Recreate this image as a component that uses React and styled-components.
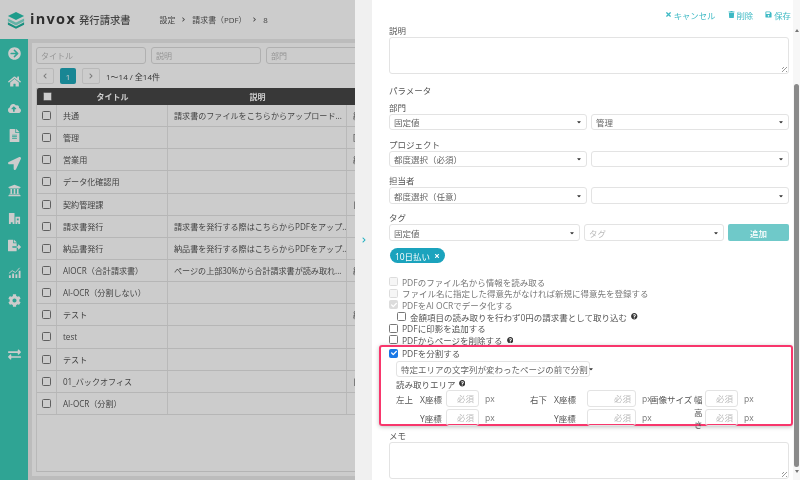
import React from "react";
import styled, { createGlobalStyle } from "styled-components";
import {
  FaArrowCircleRight, FaHome, FaCloudUploadAlt, FaFileAlt, FaLocationArrow, FaUniversity,
  FaFileExport, FaCog, FaExchangeAlt, FaTimes, FaTrash, FaSave, FaQuestionCircle, FaCheck, FaCaretDown, FaChevronLeft, FaChevronRight,
} from "react-icons/fa";

const Global = createGlobalStyle`
  html, body { margin: 0; padding: 0; width: 800px; height: 480px; overflow: hidden; background: #fff; }
  body { font-family: "Open Sans", "Noto Sans CJK JP", sans-serif; font-size: 8.5px; color: #555; }
  * { box-sizing: border-box; }
`;

const Screen = styled.div`
  display: flex; width: 800px; height: 480px; overflow: hidden; filter: blur(0.3px);
`;
const Page = styled.div`
  position: relative; flex: 0 0 355px; width: 355px; height: 480px; overflow: hidden;
  display: flex; flex-direction: column; background: #ececec;
  &::after { content: ""; position: absolute; inset: 0; background: rgba(0,0,0,.2); }
`;
const Header = styled.header`
  flex: 0 0 39px; display: flex; align-items: center; background: #fff; padding-left: 7px;
`;
const Logo = styled.svg`width: 18px; height: 18px; flex: none;`;
const Brand = styled.span`
  margin-left: 5px; font: 700 14.5px/1 "Open Sans", sans-serif; letter-spacing: 1.3px; color: #3a3a3a;
`;
const Product = styled.span`
  margin-left: 3px; font-size: 10.3px; font-weight: 500; color: #555;
`;
const Crumbs = styled.nav`
  margin-left: 29px; display: flex; align-items: center; font-size: 7.9px; color: #555;
  svg { width: 5px; height: 5px; margin: 0 6px; }
`;
const Body = styled.div`flex: 1; display: flex; min-height: 0;`;
const Side = styled.aside`
  flex: 0 0 28px; background: #3bceba; display: flex; flex-direction: column; color: #fff; padding-top: 1px;
`;
const SideIcon = styled.div`
  flex: 0 0 27.4px; display: flex; align-items: center; justify-content: center;
  margin-top: ${p => p.$gap ? "27.4px" : 0};
  svg { width: 13px; height: 13px; }
`;
const Main = styled.main`
  flex: 1; min-width: 0; background: #ebebeb; padding: 4px 0 4px 4px; display: flex;
`;
const Card = styled.section`
  flex: 1; width: 323px; background: #fff; padding: 4px 0 4px 4px; display: flex; flex-direction: column; overflow: hidden;
`;
const Filters = styled.div`display: flex; gap: 5px; width: 400px;`;
const FilterInput = styled.div`
  flex: 0 0 110px; height: 17px; border: 1px solid #ddd; border-radius: 3px; padding-left: 4px; line-height: 15px; color: #bbb; font-size: 8px;
`;
const Pager = styled.div`display: flex; align-items: center; height: 16px; margin-top: 4px; font-size: 8px; color: #444;`;
const PageButton = styled.div`
  width: 18px; height: 16px; border: 1px solid #e8e8e8; border-radius: 2px; display: flex; align-items: center; justify-content: center; color: #999;
  margin-right: ${p => p.$mr || 0}px;
  svg { width: 6px; height: 6px; }
`;
const PageCurrent = styled.div`
  width: 16px; height: 16px; border-radius: 2px; background: #1fa8ba; color: #fff; display: flex; align-items: center; justify-content: center; font-size: 8px; margin-right: 6px;
`;
const Table = styled.div`
  margin-top: 4px; flex: 1; border-bottom: 1px solid #e2e2e2; border-left: 1px solid #e8e8e8; display: flex; flex-direction: column; min-width: 0;
`;
const HeadRow = styled.div`
  flex: 0 0 17px; display: grid; grid-template-columns: 20px 111px 179px 1fr; align-items: center; background: #474747; color: #fff; font-weight: 600; font-size: 8px; text-align: center; border-radius: 2px 0 0 0;
`;
const Row = styled.div`
  flex: 0 0 22.15px; display: grid; grid-template-columns: 20px 111px 179px 1fr; border-bottom: 1px solid #e4e4e4; align-items: stretch; font-size: 8.1px;
`;
const Cell = styled.div`
  border-right: 1px solid #e8e8e8; padding-left: 6px; display: flex; align-items: center; white-space: nowrap; overflow: hidden; letter-spacing: -0.02px;
  &:last-child { border-right: 0; }
`;
const TickCell = styled(Cell)`padding-left: 0; justify-content: center;`;
const Box = styled.span`
  display: inline-flex; align-items: center; justify-content: center; flex: none;
  width: 9px; height: 9px; border-radius: 1.5px;
  border: 1px solid ${p => p.$on ? "#1978e6" : p.$off ? "#dcdcdc" : "#777"};
  background: ${p => p.$on ? "#1978e6" : p.$off ? (p.$grayed ? "#dcdcdc" : "#f6f6f6") : p.$fill ? "#fff" : "transparent"};
  color: #fff;
  svg { width: 6px; height: 6px; }
`;

const Drawer = styled.div`flex: 1; display: flex; min-width: 0;`;
const Handle = styled.div`
  flex: 0 0 17px; background: #f0f0f0; display: flex; align-items: center; justify-content: center; color: #1fb0c0; padding-top: 0;
  svg { width: 6px; height: 6px; }
`;
const Panel = styled.div`flex: 1; min-width: 0; background: #fff; display: flex;`;
const Form = styled.form`flex: 1; min-width: 0; padding: 0 4px 0 17px; display: flex; flex-direction: column; font-size: 8.5px;`;
const Actions = styled.div`
  flex: 0 0 25px; display: flex; justify-content: flex-end; align-items: center; gap: 12px; padding-top: 4px; padding-right: 0; margin-right: -2px; color: #3db9c4; font-size: 8.4px; margin-bottom: 0;
`;
const Action = styled.span`
  display: inline-flex; align-items: center; gap: 2px;
  svg { width: 7px; height: 7px; }
`;
const Label = styled.div`height: 11px; line-height: 11px; color: #555; margin-top: ${p => p.$mt || 0}px; margin-bottom: ${p => p.$mb ?? 1}px;`;
const TextArea = styled.div`
  position: relative; height: 37px; border: 1px solid #e3e3e3; border-radius: 3px; flex: none;
  &::after { content: ""; position: absolute; right: 1px; bottom: 1px; width: 5px; height: 5px;
    background: repeating-linear-gradient(135deg, transparent 0 1px, #999 1px 1.6px, transparent 1.6px 2.4px); }
`;
const Fields = styled.div`display: flex; gap: 4px; height: ${p => p.$h || 17}px; flex: none;`;
const Select = styled.div`
  flex: ${p => p.$w ? `0 0 ${p.$w}px` : 1}; min-width: 0; border: 1px solid #e3e3e3; border-radius: 3px; padding: 0 4px; display: flex; align-items: center; justify-content: space-between; color: ${p => p.$ph ? "#bbb" : "#666"}; white-space: nowrap;
  svg { width: 6px; height: 6px; color: #333; flex: none; }
`;
const AddButton = styled.div`
  flex: 1; background: #6fc9c9; border-radius: 2px; color: #fff; display: flex; align-items: center; justify-content: center; font-weight: 500;
`;
const Chip = styled.div`
  align-self: flex-start; margin: 7px 0 0 1px; width: 55px; height: 15px; border-radius: 8px; background: #1ba3bd; color: #fff; display: flex; align-items: center; justify-content: center; gap: 4px; font-size: 8.5px;
  svg { width: 6px; height: 6px; }
`;
const Checks = styled.div`margin-top: 13px; display: flex; flex-direction: column;`;
const Check = styled.div`
  height: 11.6px; display: flex; align-items: center; gap: 4px; color: ${p => p.$dim ? "#777" : "#555"}; padding-left: ${p => p.$in ? 8 : 0}px; white-space: nowrap; flex: none;
  svg.help { width: 6.5px; height: 6.5px; color: #333; }
`;
const Highlight = styled.div`
  margin: 0 -4px 0 -10px; flex: none; height: 81px; padding: 1px 0 0 8px; border: 2px solid #f8366c; border-radius: 3px; box-shadow: 0 1px 4px rgba(0,0,0,.25); display: flex; flex-direction: column; margin-top: -1px;
`;
const WideSelect = styled(Select)`flex: none; width: 194px; height: 16px; margin: 2px 0 0 7px;`;
const AreaTitle = styled.div`
  margin: 1px 0 0 7px; height: 11px; display: flex; align-items: center; gap: 3px; color: #555;
  svg { width: 6.5px; height: 6.5px; color: #333; }
`;
const AreaGrid = styled.div`
  margin: 0 0 0 7px; display: grid; grid-template-columns: 24px 26px 33px 35px 16px 24px 33px 49px 14px 44px 11px 33px 1fr; grid-auto-rows: 19px; align-items: center; padding-top: 0; color: #555;
`;
const RightText = styled.span`text-align: right; padding-right: 5px;`;
const NumberBox = styled.div`
  height: 17px; border: 1px solid #e3e3e3; border-radius: 3px; text-align: right; padding-right: 4px; line-height: 15px; color: #bbb;
`;
const Unit = styled.span`padding-left: 6px; color: #777;`;
const ScrollBar = styled.div`
  flex: 0 0 7px; background: #f7f7f7; display: flex; flex-direction: column; align-items: center; padding-top: 29px; position: relative;
`;
const Arrow = styled.span`
  width: 0; height: 0; border-left: 2.5px solid transparent; border-right: 2.5px solid transparent;
  ${p => p.$down ? "border-top: 3px solid #777;" : "border-bottom: 3px solid #777;"}
`;
const Thumb = styled.div`width: 5px; height: 383px; margin-top: 52px; border-radius: 3px; background: #8a8a8a; flex: none;`;
const ArrowDown = styled(Arrow)`margin-top: 3px;`;

const rows = [
  ["共通", "請求書のファイルをこちらからアップロード...", "経理"],
  ["管理", "", "[管理"],
  ["営業用", "", "経理"],
  ["データ化確認用", "", ""],
  ["契約管理課", "", "日本"],
  ["請求書発行", "請求書を発行する際はこちらからPDFをアップ...", ""],
  ["納品書発行", "納品書を発行する際はこちらからPDFをアップ...", ""],
  ["AIOCR（合計請求書）", "ページの上部30%から合計請求書が読み取れ...", "経理"],
  ["AI-OCR（分割しない）", "", ""],
  ["テスト", "", "経理"],
  ["test", "", ""],
  ["テスト", "", ""],
  ["01_バックオフィス", "", "日本"],
  ["AI-OCR（分割）", "", ""],
];

const Buildings = () => (
  <svg viewBox="0 0 14 14" fill="currentColor"><path d="M1 1h6v12H5v-2H3v2H1zM8 5h5v8h-2v-2H10v2H8z" /><path d="M9.5 7h2v2h-2z" fill="#3bceba" /></svg>
);
const Chart = () => (
  <svg viewBox="0 0 14 14" fill="currentColor"><path d="M1 10h2v3H1zM4.5 8h2v5h-2zM8 9h2v4H8zM11.5 5h2v8h-2z" /><path d="M1 8l3.5-3 3.5 2 4.5-5" fill="none" stroke="currentColor" strokeWidth="1" /></svg>
);

const Help = () => <FaQuestionCircle className="help" />;
const Down = () => <FaCaretDown />;

function Area({ a, b, c, d, e, f }) {
  return (
    <>
      <span>{a}</span><span>{b}</span><NumberBox>必須</NumberBox><Unit>px</Unit><span />
      <span>{c}</span><span>{d}</span><NumberBox>必須</NumberBox><Unit>px</Unit>
      <span>{e}</span><RightText>{f}</RightText><NumberBox>必須</NumberBox><Unit>px</Unit>
    </>
  );
}

export default function App() {
  return (
    <Screen>
      <Global />
      <Page>
        <Header>
          <Logo viewBox="0 0 20 20">
            <path d="M10 1l9 4.5L10 10 1 5.5z" fill="#27c3ae" />
            <path d="M1 8.2l9 4.5 9-4.5v3.3l-9 4.5-9-4.5z" fill="#7fe0d2" />
            <path d="M1 12.6l9 4.5 9-4.5v2.6L10 19.6 1 15.2z" fill="#1fb49f" />
          </Logo>
          <Brand>invox</Brand>
          <Product>発行請求書</Product>
          <Crumbs>設定<FaChevronRight />請求書（PDF）<FaChevronRight />8</Crumbs>
        </Header>
        <Body>
          <Side>
            <SideIcon><FaArrowCircleRight /></SideIcon>
            <SideIcon><FaHome /></SideIcon>
            <SideIcon><FaCloudUploadAlt /></SideIcon>
            <SideIcon><FaFileAlt /></SideIcon>
            <SideIcon><FaLocationArrow /></SideIcon>
            <SideIcon><FaUniversity /></SideIcon>
            <SideIcon><Buildings /></SideIcon>
            <SideIcon><FaFileExport /></SideIcon>
            <SideIcon><Chart /></SideIcon>
            <SideIcon><FaCog /></SideIcon>
            <SideIcon $gap><FaExchangeAlt /></SideIcon>
          </Side>
          <Main>
            <Card>
              <Filters>
                <FilterInput>タイトル</FilterInput>
                <FilterInput>説明</FilterInput>
                <FilterInput>部門</FilterInput>
              </Filters>
              <Pager>
                <PageButton $mr={6}><FaChevronLeft /></PageButton>
                <PageCurrent>1</PageCurrent>
                <PageButton $mr={6}><FaChevronRight /></PageButton>
                1〜14 / 全14件
              </Pager>
              <Table>
                <HeadRow>
                  <span style={{ display: "flex", justifyContent: "center" }}><Box $fill /></span>
                  <span>タイトル</span>
                  <span>説明</span>
                  <span />
                </HeadRow>
                {rows.map((r, i) => (
                  <Row key={i}>
                    <TickCell><Box /></TickCell>
                    <Cell>{r[0]}</Cell>
                    <Cell>{r[1]}</Cell>
                    <Cell>{r[2]}</Cell>
                  </Row>
                ))}
              </Table>
            </Card>
          </Main>
        </Body>
      </Page>
      <Drawer>
        <Handle><FaChevronRight /></Handle>
        <Panel>
          <Form>
            <Actions>
              <Action><FaTimes />キャンセル</Action>
              <Action><FaTrash />削除</Action>
              <Action><FaSave />保存</Action>
            </Actions>
            <Label>説明</Label>
            <TextArea />
            <Label $mt={11}>パラメータ</Label>
            <Label $mt={5}>部門</Label>
            <Fields $h={16}><Select>固定値<Down /></Select><Select>管理<Down /></Select></Fields>
            <Label $mt={9}>プロジェクト</Label>
            <Fields $h={16}><Select>都度選択（必須）<Down /></Select><Select><span /><Down /></Select></Fields>
            <Label $mt={8}>担当者</Label>
            <Fields><Select>都度選択（任意）<Down /></Select><Select><span /><Down /></Select></Fields>
            <Label $mt={8}>タグ</Label>
            <Fields>
              <Select $w={191}>固定値<Down /></Select>
              <Select $w={140} $ph>タグ<Down /></Select>
              <AddButton>追加</AddButton>
            </Fields>
            <Chip>10日払い<FaTimes /></Chip>
            <Checks>
              <Check $dim><Box $off />PDFのファイル名から情報を読み取る</Check>
              <Check $dim><Box $off />ファイル名に指定した得意先がなければ新規に得意先を登録する</Check>
              <Check $dim><Box $off $grayed><FaCheck /></Box>PDFをAI OCRでデータ化する</Check>
              <Check $in><Box />金額項目の読み取りを行わず0円の請求書として取り込む<Help /></Check>
              <Check><Box />PDFに印影を追加する</Check>
              <Check><Box />PDFからページを削除する<Help /></Check>
            </Checks>
            <Highlight>
              <Check><Box $on><FaCheck /></Box>PDFを分割する</Check>
              <WideSelect>特定エリアの文字列が変わったページの前で分割<Down /></WideSelect>
              <AreaTitle>読み取りエリア<FaQuestionCircle /></AreaTitle>
              <AreaGrid>
                <Area a="左上" b="X座標" c="右下" d="X座標" e="画像サイズ" f="幅" />
                <Area a="" b="Y座標" c="" d="Y座標" e="" f="高さ" />
              </AreaGrid>
            </Highlight>
            <Label $mt={4}>メモ</Label>
            <TextArea />
          </Form>
          <ScrollBar>
            <Arrow />
            <Thumb />
            <ArrowDown $down />
          </ScrollBar>
        </Panel>
      </Drawer>
    </Screen>
  );
}
